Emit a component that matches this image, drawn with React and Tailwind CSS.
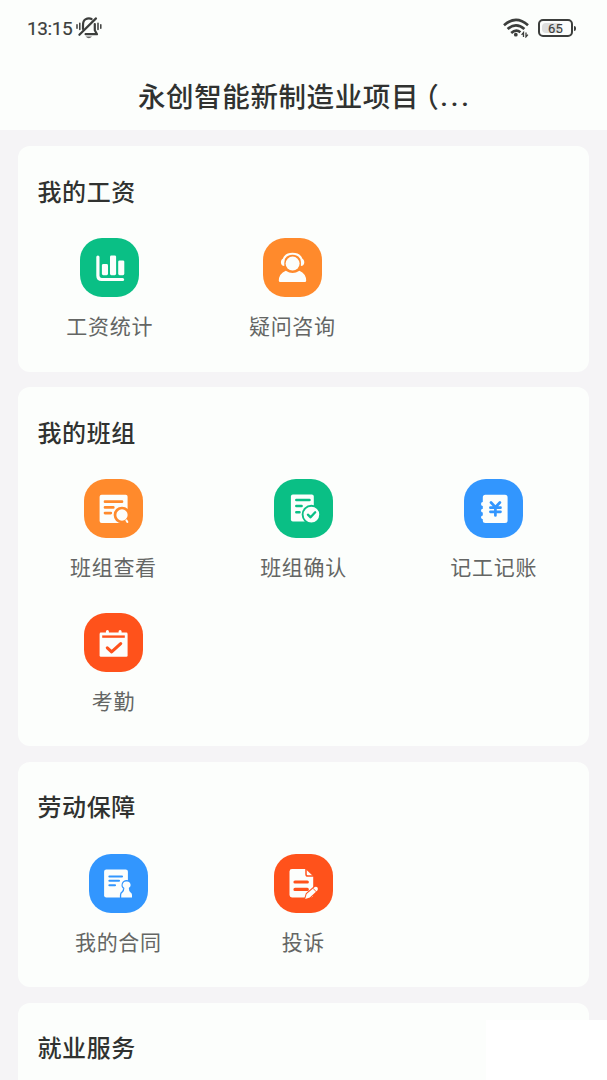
const sections = [
  {
    title: "我的工资",
    cols: "grid-cols-[182.7px_182.7px]",
    items: [
      { label: "工资统计", icon: StatsIcon, color: "bg-[#0abf85]" },
      { label: "疑问咨询", icon: SupportIcon, color: "bg-[#ff8a2c]" },
    ],
  },
  {
    title: "我的班组",
    cols: "grid-cols-3",
    items: [
      { label: "班组查看", icon: TeamViewIcon, color: "bg-[#ff8a2c]" },
      { label: "班组确认", icon: TeamConfirmIcon, color: "bg-[#0abf85]" },
      { label: "记工记账", icon: LedgerIcon, color: "bg-[#3296fe]" },
      { label: "考勤", icon: AttendanceIcon, color: "bg-[#ff521b]" },
    ],
  },
  {
    title: "劳动保障",
    cols: "grid-cols-[200px_170px]",
    items: [
      { label: "我的合同", icon: ContractIcon, color: "bg-[#3296fe]" },
      { label: "投诉", icon: ComplaintIcon, color: "bg-[#ff521b]" },
    ],
  },
  { title: "就业服务", cols: "grid-cols-3", items: [] },
];

function Glyph({ children }) {
  return (
    <svg viewBox="0 0 59 59" className="size-full" fill="#fcfefc" strokeLinecap="round" strokeLinejoin="round">
      {children}
    </svg>
  );
}

function StatsIcon() {
  return (
    <Glyph>
      <path d="M17.9 19V37.8Q17.9 41.5 21.6 41.5H42.6" fill="none" stroke="#fcfefc" strokeWidth="3.2" />
      <rect x="21.9" y="26" width="6.1" height="11.2" rx="1.4" />
      <rect x="30" y="17.4" width="6.1" height="19.8" rx="1.4" />
      <rect x="38.2" y="22.4" width="6.1" height="14.8" rx="1.4" />
    </Glyph>
  );
}

function SupportIcon() {
  return (
    <Glyph>
      <circle cx="29.6" cy="25.6" r="7" />
      <path d="M20.2 23.5C21 18.3 25 15.8 29.6 15.8S38.2 18.3 39 23.5" fill="none" stroke="#fcfefc" strokeWidth="2.1" />
      <path d="M21.3 20.4V28C19.2 28 17.9 26.3 17.9 24.2S19.2 20.4 21.3 20.4ZM37.9 20.4V28C40 28 41.3 26.3 41.3 24.2S40 20.4 37.9 20.4Z" />
      <path d="M22.8 32.7Q29.6 37.2 36.4 32.7Q43.2 35.7 43.2 42.7Q43.2 44 41.8 44H17.2Q15.8 44 15.8 42.7Q15.8 35.7 22.8 32.7Z" />
    </Glyph>
  );
}

function TeamViewIcon() {
  return (
    <Glyph>
      <rect x="15.6" y="15.7" width="28" height="28.2" rx="2" />
      <path d="M21 22.7H38M21 28.4H29.3M21 34.1H26.8" stroke="#ff8a2c" strokeWidth="2.7" />
      <circle cx="38" cy="36" r="7" stroke="#ff8a2c" strokeWidth="2.7" />
      <path d="M38.2 44.8Q41.4 44 42 41L45 44.8Z" fill="#ff8a2c" />
      <path d="M42.4 41.4L43.4 43" stroke="#fcfefc" strokeWidth="2" />
    </Glyph>
  );
}

function TeamConfirmIcon() {
  return (
    <Glyph>
      <rect x="16.9" y="15.6" width="22.9" height="26.8" rx="2" />
      <path d="M22.3 21H35.5M22.3 27.1H27.6M22.3 33.2H25.5" stroke="#0abf85" strokeWidth="2.5" />
      <circle cx="37.4" cy="35.6" r="8.8" stroke="#0abf85" strokeWidth="1.9" />
      <path d="M33.9 35.7L36.6 38.3L41.2 33.3" fill="none" stroke="#0abf85" strokeWidth="2.3" />
    </Glyph>
  );
}

function LedgerIcon() {
  return (
    <Glyph>
      <path d="M21.4 15.8H41Q43.6 15.8 43.6 18.4V41.4Q43.6 43.9 41 43.9H21.4Q18.8 43.9 18.8 41.4V40.2Q17 40 17 38.3Q17 36.6 18.8 36.4V33.6Q17 33.4 17 31.6Q17 29.9 18.8 29.7V27Q17 26.8 17 25Q17 23.2 18.8 23V18.4Q18.8 15.8 21.4 15.8Z" />
      <path d="M27 23.5L31.4 28.2L35.9 23.5M31.4 28.2V36.5M26.4 28.7H36.5M26.4 32.8H36.5" fill="none" stroke="#3296fe" strokeWidth="2.7" />
    </Glyph>
  );
}

function AttendanceIcon() {
  return (
    <Glyph>
      <rect x="15.6" y="19.6" width="28" height="24.2" rx="1.3" />
      <path d="M23.4 18.6V21M36.1 18.6V21" stroke="#fcfefc" strokeWidth="3" />
      <path d="M18.2 23.6H40.8" stroke="#ff521b" strokeWidth="2.4" strokeLinecap="butt" />
      <path d="M23.3 34.8L27.6 38.9L36.7 30.6" fill="none" stroke="#ff521b" strokeWidth="3.1" />
    </Glyph>
  );
}

function ContractIcon() {
  return (
    <Glyph>
      <rect x="15.1" y="15.6" width="23.8" height="27.8" rx="2.2" />
      <path d="M20.4 22.5H33M20.4 26.8H30M20.4 31.2H26" stroke="#3296fe" strokeWidth="2.1" />
      <path
        d="M37.6 27.6A3.5 3.5 0 0 1 39.6 34Q39.6 37 41.5 38.6Q42.8 39.4 42.8 41V43.4H32.4V41Q32.4 39.4 33.7 38.6Q35.6 37 35.6 34A3.5 3.5 0 0 1 37.6 27.6Z"
        stroke="#3296fe"
        strokeWidth="3"
      />
      <path d="M37.6 27.5A3.5 3.5 0 0 1 39.8 34Q39.8 37 41.6 38.6Q43 39.4 43 41V43.4H32.2V41Q32.2 39.4 33.6 38.6Q35.4 37 35.4 34A3.5 3.5 0 0 1 37.6 27.5Z" />
    </Glyph>
  );
}

function ComplaintIcon() {
  return (
    <Glyph>
      <path d="M18 15H31.5L39.2 22.3V41Q39.2 43.4 36.8 43.4H18Q15.5 43.4 15.5 41V17.4Q15.5 15 18 15Z" />
      <path d="M32 15V20.2Q32 22 33.8 22H39.2" fill="none" stroke="#ff521b" strokeWidth="1.5" />
      <path d="M21 28H33.3M21 35.4H33.3" stroke="#ff521b" strokeWidth="3.2" />
      <path d="M31.6 44.6L33 40L40.8 33.3Q42.2 32.4 43.3 33.7Q44.3 35.1 43.1 36.3L35.6 43.2Z" stroke="#ff521b" strokeWidth="2.6" />
      <path d="M31.2 45L32.6 40L40.8 33.1Q42.3 32.2 43.5 33.6Q44.5 35.1 43.3 36.4L35.8 43.4Z" />
      <path d="M39.3 34.6L42 37.5" stroke="#ff521b" strokeWidth="0.9" />
    </Glyph>
  );
}

function MutedBellIcon() {
  return (
    <svg viewBox="0 0 26 24" className="h-6 w-[26px]" fill="none" stroke="#3c3e3c" strokeWidth="2.2" strokeLinecap="round" strokeLinejoin="round">
      <path d="M7 13V9.5Q7 4.8 9.4 3.4Q12.7 1.4 15.6 3M18.8 8V14.2L21 18.2H9.6" />
      <path d="M20 2.4L3.4 18.8" />
      <path d="M9.6 20.6Q12.8 24 16 20.6Z" fill="#666" stroke="none" />
      <path d="M1 8.8V12.2M3.8 7.2V13.4M22 7.2V13.4M24.8 8.8V12.2" strokeWidth="1.5" />
    </svg>
  );
}

function WifiIcon() {
  return (
    <svg viewBox="0 0 26 20" className="h-5 w-[26px]" fill="none" stroke="#3c3e3c" strokeWidth="2.7">
      <path d="M1 7.2Q13-3.3 25 7.2M4.6 11.1Q13 3.6 21.4 11.1M8.2 14.9Q13 10.7 17.4 14.2" />
      <circle cx="12.8" cy="16.7" r="1.9" fill="#3c3e3c" stroke="none" />
      <path d="M20.5 19V14.6L18.6 16.8M23 14.4V18.8L24.9 16.6" strokeWidth="1.3" />
    </svg>
  );
}

function StatusBar() {
  return (
    <div className="flex h-[56px] items-center justify-between pr-[34px] pl-[27px] text-[#3c3e3c]">
      <div className="flex items-center gap-[4px]">
        <span className="w-[45px] font-[Roboto,sans-serif] text-[19px] leading-none whitespace-nowrap tracking-[-0.4px] [-webkit-text-stroke:0.2px_#3c3e3c]">13:15</span>
        <MutedBellIcon />
      </div>
      <div className="flex items-center gap-[9px]">
        <WifiIcon />
        <div className="relative flex h-[18px] w-[35px] items-center justify-center rounded-[5px] border-2 border-[#3c3e3c]">
          <div className="absolute inset-y-[2px] left-[2px] w-[18px] rounded-l-sm bg-[#dedfde]" />
          <span className="relative font-[Roboto,sans-serif] text-[13px] leading-none tracking-[0.3px] [-webkit-text-stroke:0.15px_#3c3e3c]">65</span>
          <div className="absolute top-[5px] -right-[5px] h-[5px] w-[2px] rounded-r-sm bg-[#3c3e3c]" />
        </div>
      </div>
    </div>
  );
}

function MenuItem({ item }) {
  const Icon = item.icon;
  return (
    <div className="flex h-[133.5px] flex-col items-center">
      <div className={`size-[59px] rounded-[22px] ${item.color}`}>
        <Icon />
      </div>
      <span className="mt-[13px] pl-[0.7px] text-[21px] leading-[30px] tracking-[0.7px] text-[#646664]">{item.label}</span>
    </div>
  );
}

function Section({ section }) {
  return (
    <section className="rounded-[12px] bg-[#fcfefc]">
      <h2 className="flex h-[92px] items-center pb-[3px] pl-[19.5px] text-[24px] leading-none font-medium tracking-[0.6px] text-[#303230]">
        {section.title}
      </h2>
      <div className={`grid ${section.cols}`}>
        {section.items.map((item) => (
          <MenuItem key={item.label} item={item} />
        ))}
      </div>
    </section>
  );
}

export default function App() {
  return (
    <div className="relative h-[1080px] overflow-hidden bg-[#f5f4f6] font-['Noto_Sans_CJK_SC',sans-serif]">
      <header className="h-[130px] bg-[#fcfefc]">
        <StatusBar />
        <h1 className="flex h-[80px] items-center pb-px pl-[138px] text-[27.5px] leading-none font-medium whitespace-nowrap tracking-[0.6px] text-[#303230]">
          永创智能新制造业项目
          <span className="ml-[6px] [font-feature-settings:'halt']">（</span>
          <span className="ml-px pt-0.5 font-[Roboto,sans-serif] tracking-[2.8px]">...</span>
        </h1>
      </header>
      <main className="flex flex-col gap-[15.5px] pt-4 pr-[18.5px] pl-[18px]">
        {sections.map((section) => (
          <Section key={section.title} section={section} />
        ))}
      </main>
      <div className="absolute right-0 bottom-0 h-[60px] w-[121px] bg-white" />
    </div>
  );
}
